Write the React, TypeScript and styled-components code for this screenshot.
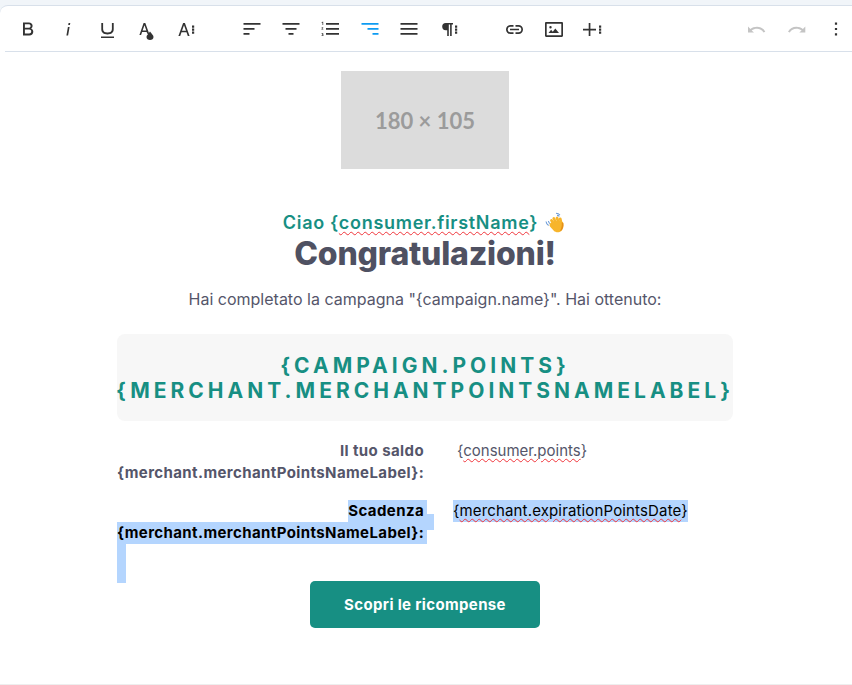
import React from "react";
import styled, { createGlobalStyle } from "styled-components";

const GlobalStyle = createGlobalStyle`
  html, body { margin: 0; padding: 0; background: #fff; }
  body { font-family: Inter, "Liberation Sans", sans-serif; overflow: hidden; }
`;

const TEAL = "#178f83";

const Page = styled.div`
  height: 685px;
  background: #f1f5f9;
  padding-top: 5px;
  box-sizing: border-box;
`;

const Editor = styled.div`
  height: 680px;
  box-sizing: border-box;
  background: #fff;
  border-top: 1px solid #d8e0ea;
  border-bottom: 1px solid #eeeeee;
  border-top-left-radius: 8px;
`;

const Toolbar = styled.div`
  display: flex;
  align-items: center;
  height: 45px;
  margin-left: 5px;
  padding-left: 3.5px;
  border-bottom: 1px solid #d8e0ea;
`;

const Group = styled.div<{ $right?: boolean }>`
  display: flex;
  margin-right: ${(p) => (p.$right ? 0 : "26.5px")};
  margin-left: ${(p) => (p.$right ? "auto" : 0)};
`;

const ToolButton = styled.div<{ $color?: string; $narrow?: boolean }>`
  width: ${(p) => (p.$narrow ? "32px" : "39.4px")};
  margin-left: ${(p) => (p.$narrow ? "4px" : 0)};
  height: 40px;
  display: flex;
  align-items: center;
  justify-content: center;
  color: ${(p) => p.$color || "#333"};
`;

const Content = styled.div`
  width: 616px;
  margin-left: 117px;
  padding-top: 19px;
  display: flex;
  flex-direction: column;
`;

const Placeholder = styled.div`
  align-self: center;
  width: 168px;
  height: 98px;
  background: #dcdcdc;
  color: #9b9b9b;
  font: 700 22px Lato, sans-serif;
  display: flex;
  align-items: center;
  justify-content: center;
`;

const Greeting = styled.div`
  margin-top: 43px;
  text-align: center;
  color: ${TEAL};
  font-size: 18px;
  font-weight: 600;
  line-height: 22px;
  letter-spacing: 0.7px;
  display: flex;
  justify-content: center;
  align-items: center;
  gap: 7px;
  white-space: pre;
`;

const Spell = styled.span`
  text-decoration: underline wavy #f0353b 1.4px;
  text-underline-offset: 2px;
`;

const Title = styled.h1`
  margin: 0;
  text-align: center;
  color: #4f5162;
  font-size: 32px;
  font-weight: 800;
  line-height: 40px;
  letter-spacing: -0.2px;
`;

const Lead = styled.p`
  margin: 14px 0 0;
  text-align: center;
  color: #55566a;
  font-size: 16px;
  line-height: 22px;
`;

const PointsBox = styled.div`
  margin-top: 24px;
  height: 87px;
  background: #f7f7f7;
  border-radius: 8px;
  display: flex;
  flex-direction: column;
  align-items: center;
  justify-content: center;
  color: ${TEAL};
  font-size: 21px;
  font-weight: 700;
  line-height: 25px;
  letter-spacing: 4px;
  text-transform: uppercase;
  white-space: nowrap;
`;

const InfoRow = styled.div<{ $top: number; $selected?: boolean }>`
  margin-top: ${(p) => p.$top}px;
  display: grid;
  grid-template-columns: 307px 1fr;
  color: ${(p) => (p.$selected ? "#000" : "#55566a")};
  font-size: 15px;
  line-height: 22px;
`;

const Label = styled.div`
  text-align: right;
  font-weight: 700;
  letter-spacing: 0.4px;
  white-space: nowrap;
`;

const Value = styled.div<{ $indent: number; $tracking?: number }>`
  padding-left: ${(p) => p.$indent}px;
  letter-spacing: ${(p) => p.$tracking || 0}px;
`;

const Mark = styled.span`
  background: #b4d5fe;
  display: inline-block;
`;

const LabelMark = styled(Mark)<{ $trail?: boolean }>`
  position: relative;
  padding-right: 3px;
  margin-right: -3px;
  ${(p) =>
    p.$trail &&
    `
    &::after {
      content: "";
      position: absolute;
      left: 100%;
      top: 14px;
      width: 7px;
      height: 16px;
      background: #b4d5fe;
    }
  `}
`;

const TailMark = styled.div`
  width: 9px;
  height: 39px;
  background: #b4d5fe;
`;

const Cta = styled.div`
  align-self: center;
  margin-top: -2px;
  width: 230px;
  height: 47px;
  border-radius: 5px;
  background: ${TEAL};
  color: #fff;
  font-size: 15px;
  font-weight: 700;
  letter-spacing: 0.35px;
  display: flex;
  align-items: center;
  justify-content: center;
`;

const Icon = ({ d }: { d: string }) => (
  <svg width={24} height={24} viewBox="0 0 24 24" fill="currentColor">
    <path d={d} />
  </svg>
);

const ICONS = {
  bold: "M7 5.500h5.900c2.200 0 3.700 1.400 3.700 3.300 0 1.200-.6 2.200-1.500 2.800 1.300.5 2.200 1.700 2.200 3.200 0 2.200-1.700 3.700-3.900 3.700H7zm1.900 1.800v3.500h3.700c1.100 0 2-.7 2-1.800s-.9-1.700-2-1.700zm0 5.300v3.900h4.300c1.200 0 2-.8 2-2s-.8-1.900-2-1.900z",
  italic: "M12.600 6h1.700l-.4 2.100h-1.700zM11.900 10h1.700l-1.500 8.500h-1.700z",
  underline: "M6.300 6h1.800v6c0 2.300 1.500 3.600 4.400 3.600s4.400-1.300 4.400-3.600V6h1.800v6.200c0 3.300-2.300 5.200-6.200 5.200s-6.200-1.900-6.200-5.200zM6 19.400h13V21H6z",
  fill: "M9.600 6h1.700l4 11h-1.700L12.600 15H8.100l-1 3H5.400zm.9 2.200L8.600 13.500h3.700zM16 14.500c2 2.500 3.500 4 3.500 5.500 0 1.700-1.500 3-3.500 3s-3.500-1.300-3.500-3c0-1.500 1.500-3 3.500-5.500z",
  size: "M9.100 6h1.800l4.700 13h-1.800l-1.300-3.700H7.500L6.200 19H4.400zm.9 2.200L8 13.800h4zM18 8.500h2.200v2.200H18zM18 11.500h2.200v2.200H18zM18 14.500h2.200v2.200H18z",
  left: "M3.500 6h17v1.800h-17zM3.500 11h11v1.800h-11zM3.500 16h6v1.800h-6z",
  center: "M3.500 6h17v1.800h-17zM6.500 11h11v1.800h-11zM9.500 16h5v1.800h-5z",
  ol: "M8 6h13v1.800H8zM8 11h13v1.800H8zM8 16h13v1.800H8zM3.600 5.200l1-.5h.6V8h-.7V5.600l-.7.3zM3.400 12.300c0-.4.3-.6.8-1 .3-.2.4-.3.4-.5s-.1-.3-.4-.3c-.2 0-.4.1-.6.3l-.3-.4c.2-.3.6-.5 1-.5.6 0 1 .3 1 .8 0 .4-.2.6-.6.9l-.5.4h1.100v.5H3.400zM3.500 18.200c.2.2.4.3.7.3s.5-.1.5-.4-.2-.4-.6-.4H4v-.4h.2c.3 0 .5-.1.5-.3s-.2-.3-.4-.3-.5.1-.6.2l-.3-.4c.2-.2.6-.4 1-.4.6 0 1 .3 1 .8 0 .3-.2.5-.4.6.3.1.5.3.5.7 0 .5-.4.9-1.100.9-.4 0-.8-.2-1-.4z",
  right: "M3.500 6h17v1.800h-17zM9.500 11h11v1.800h-11zM14.500 16h6v1.800h-6z",
  justify: "M3.500 6h17v1.800h-17zM3.500 11h17v1.800h-17zM3.500 16h17v1.800h-17z",
  para: "M8.800 6H16v1.600h-1.300V19h-1.600V7.600h-1.300V19h-1.600v-5.800h-1.400a3.600 3.600 0 0 1 0-7.200zM18 8.500h2.200v2.200H18zM18 11.500h2.200v2.200H18zM18 14.500h2.200v2.200H18z",
  link: "M8.500 8h3v1.700h-3a2.800 2.800 0 0 0 0 5.600h3V17h-3a4.500 4.500 0 0 1 0-9zm5 0h3a4.500 4.500 0 0 1 0 9h-3v-1.700h3a2.800 2.800 0 0 0 0-5.600h-3zM8 11.700h9v1.600H8z",
  image: "M4.200 5h15.600C20.500 5 21 5.500 21 6.200v12.600c0 .7-.5 1.200-1.200 1.200H4.200C3.500 20 3 19.500 3 18.800V6.200C3 5.500 3.500 5 4.200 5zm.5 1.700v11.600h14.600V6.700zM8.500 9a1.200 1.200 0 1 1 0 2.400 1.200 1.200 0 0 1 0-2.400zM6.500 16l2.600-3.200 1.700 1.900 2.500-3.300 3.700 4.600z",
  plus: "M7.700 6h1.700v5.700H15v1.700H9.400V19H7.700v-5.600H2v-1.700h5.700zM18 8.500h2.200v2.200H18zM18 11.500h2.200v2.200H18zM18 14.500h2.200v2.200H18z",
  undo: "M3 9.500V15.500H9L6.700 13.500C8.200 12.300 10 11.800 12 11.800C14.600 11.800 17 13 18.500 15.500L20.300 14.700C18.500 11.300 15.500 9.800 12 9.800C9.500 9.800 7.200 10.600 5.400 12Z",
  redo: "M21.300 9.500V15.500H15.300L17.600 13.500C16.100 12.300 14.300 11.800 12.300 11.800C9.700 11.800 7.300 13 5.800 15.500L4 14.700C5.800 11.300 8.800 9.800 12.300 9.800C14.800 9.800 17.100 10.600 18.900 12Z",
  more: "M10.900 5.500h2.200v2.200h-2.200zM10.900 10.900h2.200v2.200h-2.200zM10.900 16.300h2.200v2.200h-2.200z",
};

const Wave = () => (
  <svg width="22" height="22" viewBox="0 0 22 22">
    <path d="M1 9.500c.2 1.500 1.200 3 2.600 4M3.400 9c.2 1 .7 1.900 1.400 2.600" stroke="#6c9bd8" fill="none" strokeWidth="1.100" />
    <path d="M11 1.200c1.600 0 3 .6 4 1.800M12 3.400c1 0 1.800.4 2.400 1" stroke="#6c9bd8" fill="none" strokeWidth="1.100" />
    <g stroke="#f7b52c" strokeWidth="2.800" strokeLinecap="round">
      <path d="M9 12L6.500 8.500" />
      <path d="M11 11L8.800 6.500" />
      <path d="M13.500 10.500L12 6" />
      <path d="M16 10.500L15.200 6.800" />
    </g>
    <path d="M5 11.500c1-1.500 4-2.500 7-2.500 3 0 6 .5 6.300 2 .5 3-.1 6-2 8-2.300 2-5.800 1.500-7.500-.2L5 14.500c-.6-.9-.4-2.200 0-3z" fill="#f7b52c" />
    <path d="M16.500 18.500c1.500-2 2.300-4.500 1.800-7.500l-1.600-.5c.4 3-.2 5.800-1.800 8.500z" fill="#e58f1a" />
  </svg>
);

export default function App() {
  return (
    <Page>
      <GlobalStyle />
      <Editor>
        <Toolbar>
          <Group>
            <ToolButton><Icon d={ICONS.bold} /></ToolButton>
            <ToolButton><Icon d={ICONS.italic} /></ToolButton>
            <ToolButton><Icon d={ICONS.underline} /></ToolButton>
            <ToolButton><Icon d={ICONS.fill} /></ToolButton>
            <ToolButton><Icon d={ICONS.size} /></ToolButton>
          </Group>
          <Group>
            <ToolButton><Icon d={ICONS.left} /></ToolButton>
            <ToolButton><Icon d={ICONS.center} /></ToolButton>
            <ToolButton><Icon d={ICONS.ol} /></ToolButton>
            <ToolButton $color="#0d9bf2"><Icon d={ICONS.right} /></ToolButton>
            <ToolButton><Icon d={ICONS.justify} /></ToolButton>
            <ToolButton><Icon d={ICONS.para} /></ToolButton>
          </Group>
          <Group>
            <ToolButton><Icon d={ICONS.link} /></ToolButton>
            <ToolButton><Icon d={ICONS.image} /></ToolButton>
            <ToolButton><Icon d={ICONS.plus} /></ToolButton>
          </Group>
          <Group $right>
            <ToolButton $color="#c4c4c4"><Icon d={ICONS.undo} /></ToolButton>
            <ToolButton $color="#c4c4c4"><Icon d={ICONS.redo} /></ToolButton>
            <ToolButton $narrow><Icon d={ICONS.more} /></ToolButton>
          </Group>
        </Toolbar>
        <Content>
          <Placeholder>180 × 105</Placeholder>
          <Greeting>
            <span>Ciao {"{"}<Spell>consumer.firstName</Spell>{"}"}</span>
            <Wave />
          </Greeting>
          <Title>Congratulazioni!</Title>
          <Lead>Hai completato la campagna "{"{campaign.name}"}". Hai ottenuto:</Lead>
          <PointsBox>
            <span>{"{campaign.points}"}</span>
            <span>{"{merchant.merchantPointsNameLabel}"}</span>
          </PointsBox>
          <InfoRow $top={19}>
            <Label>Il tuo saldo<br />{"{merchant.merchantPointsNameLabel}:"}</Label>
            <Value $indent={33}>{"{"}<Spell>consumer.points</Spell>{"}"}</Value>
          </InfoRow>
          <InfoRow $top={16} $selected>
            <Label><LabelMark $trail>Scadenza</LabelMark><br /><LabelMark>{"{merchant.merchantPointsNameLabel}:"}</LabelMark></Label>
            <Value $indent={29} $tracking={0.15}><Mark>{"{"}<Spell>merchant.expirationPointsDate</Spell>{"}"}</Mark></Value>
          </InfoRow>
          <TailMark />
          <Cta>Scopri le ricompense</Cta>
        </Content>
      </Editor>
    </Page>
  );
}
